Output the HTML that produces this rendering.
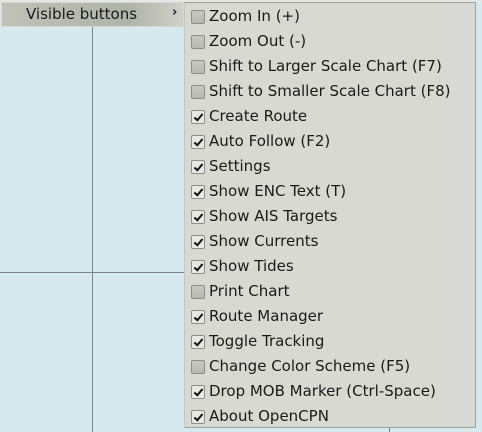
<!DOCTYPE html>
<html><head><style>
body{margin:0;width:482px;height:432px;overflow:hidden;background:#d5e9ee;position:relative;font-family:"DejaVu Sans","Liberation Sans",sans-serif;font-size:15px;color:#1a1a1a}
.v{position:absolute;width:1px;background:#7a8488}
.h{position:absolute;height:1px;background:#7a8488}
#top{position:absolute;left:0;top:0;width:482px;height:2px;background:#e6e6e2}
#item{position:absolute;left:1px;top:2px;width:183px;height:25px;background:linear-gradient(90deg,#c0c2b8,#b0b3a8 70%,#d0d0ca);border:1px solid #d8d8d2;box-sizing:border-box}
#item span{position:absolute;left:24px;top:2px;font-size:15px}
#item b{position:absolute;left:170px;top:2px;font-size:13px}
#sub{position:absolute;left:184px;top:2px;width:292px;height:426px;background:#d8d9d2;border:1px solid #9ea09a;border-left:1px solid #c6c7c0;box-sizing:border-box}
.r{position:absolute;left:6px;height:25px;line-height:24px;font-size:15px;white-space:nowrap}
.c{position:absolute;left:0;top:6px;width:14px;height:14px;box-sizing:border-box;border:1px solid #8d8e88;border-radius:2px;background:linear-gradient(#c8c8c2,#b8b9b2)}
.c.k{background:#e8e8e4}
.c.k::after{content:"";position:absolute;left:4px;top:1px;width:3px;height:7px;border:solid #111;border-width:0 2.5px 2.5px 0;transform:rotate(40deg)}
.t{position:absolute;left:18px;top:0}
</style></head><body>
<div id="top"></div>
<div class="v" style="left:92px;top:27px;height:405px"></div>
<div class="h" style="left:0;top:272px;width:184px"></div>
<div class="v" style="left:389px;top:428px;height:4px"></div>
<div id="item"><span>Visible buttons</span><b>›</b></div>
<div id="sub">
<div class="r" style="top:1px"><div class="c"></div><span class="t">Zoom In (+)</span></div>
<div class="r" style="top:26px"><div class="c"></div><span class="t">Zoom Out (-)</span></div>
<div class="r" style="top:51px"><div class="c"></div><span class="t">Shift to Larger Scale Chart (F7)</span></div>
<div class="r" style="top:76px"><div class="c"></div><span class="t">Shift to Smaller Scale Chart (F8)</span></div>
<div class="r" style="top:101px"><div class="c k"></div><span class="t">Create Route</span></div>
<div class="r" style="top:126px"><div class="c k"></div><span class="t">Auto Follow (F2)</span></div>
<div class="r" style="top:151px"><div class="c k"></div><span class="t">Settings</span></div>
<div class="r" style="top:176px"><div class="c k"></div><span class="t">Show ENC Text (T)</span></div>
<div class="r" style="top:201px"><div class="c k"></div><span class="t">Show AIS Targets</span></div>
<div class="r" style="top:226px"><div class="c k"></div><span class="t">Show Currents</span></div>
<div class="r" style="top:251px"><div class="c k"></div><span class="t">Show Tides</span></div>
<div class="r" style="top:276px"><div class="c"></div><span class="t">Print Chart</span></div>
<div class="r" style="top:301px"><div class="c k"></div><span class="t">Route Manager</span></div>
<div class="r" style="top:326px"><div class="c k"></div><span class="t">Toggle Tracking</span></div>
<div class="r" style="top:351px"><div class="c"></div><span class="t">Change Color Scheme (F5)</span></div>
<div class="r" style="top:376px"><div class="c k"></div><span class="t">Drop MOB Marker (Ctrl-Space)</span></div>
<div class="r" style="top:401px"><div class="c k"></div><span class="t">About OpenCPN</span></div>
</div>
</body></html>
